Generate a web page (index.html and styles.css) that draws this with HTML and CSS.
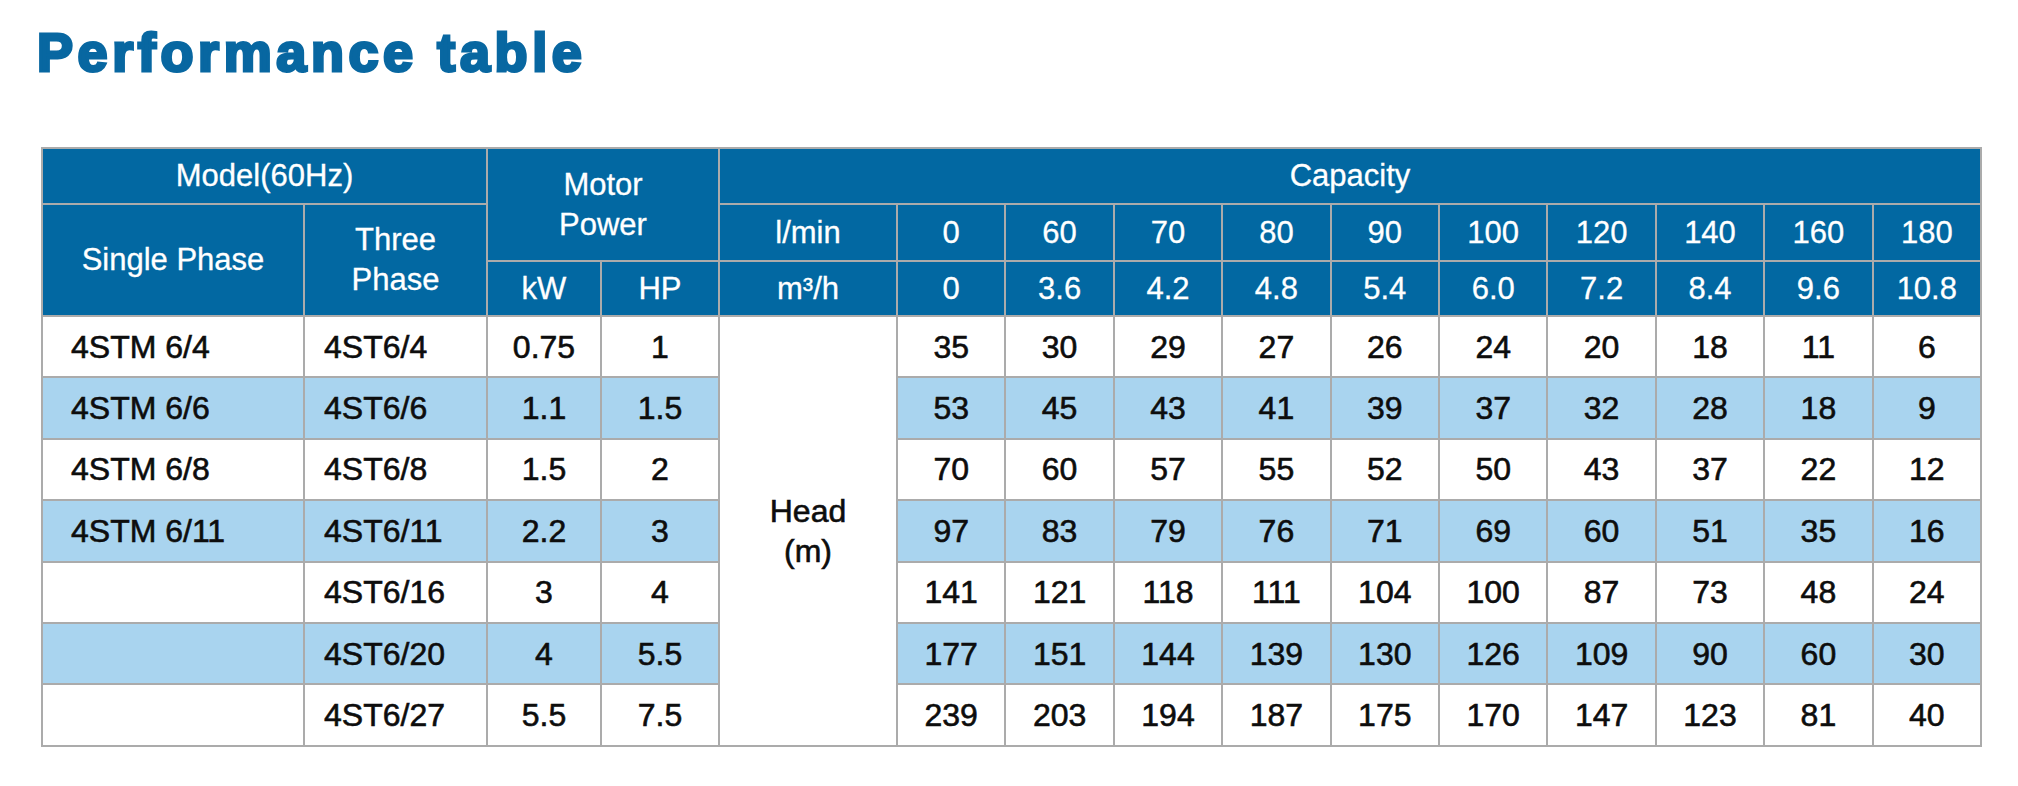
FILE: index.html
```html
<!DOCTYPE html>
<html lang="en">
<head>
<meta charset="utf-8">
<title>Performance table</title>
<link rel="stylesheet" href="styles.css">
</head>
<body>
<h1 class="title">Performance table</h1>
<div class="perf">
  <div class="hd span-model">Model(60Hz)</div>
  <div class="hd span-motor">Motor<br>Power</div>
  <div class="hd span-cap">Capacity</div>

  <div class="hd span-rows2">Single Phase</div>
  <div class="hd span-rows2">Three<br>Phase</div>
  <div class="hd">l/min</div>
  <div class="hd">0</div><div class="hd">60</div><div class="hd">70</div><div class="hd">80</div><div class="hd">90</div><div class="hd">100</div><div class="hd">120</div><div class="hd">140</div><div class="hd">160</div><div class="hd">180</div>

  <div class="hd">kW</div>
  <div class="hd">HP</div>
  <div class="hd">m³/h</div>
  <div class="hd">0</div><div class="hd">3.6</div><div class="hd">4.2</div><div class="hd">4.8</div><div class="hd">5.4</div><div class="hd">6.0</div><div class="hd">7.2</div><div class="hd">8.4</div><div class="hd">9.6</div><div class="hd">10.8</div>

  <!-- row 1 -->
  <div class="c m1">4STM 6/4</div><div class="c m2">4ST6/4</div><div class="c">0.75</div><div class="c">1</div>
  <div class="c head-cell">Head<br>(m)</div>
  <div class="c">35</div><div class="c">30</div><div class="c">29</div><div class="c">27</div><div class="c">26</div><div class="c">24</div><div class="c">20</div><div class="c">18</div><div class="c">11</div><div class="c">6</div>
  <!-- row 2 -->
  <div class="c alt m1">4STM 6/6</div><div class="c alt m2">4ST6/6</div><div class="c alt">1.1</div><div class="c alt">1.5</div>
  <div class="c alt">53</div><div class="c alt">45</div><div class="c alt">43</div><div class="c alt">41</div><div class="c alt">39</div><div class="c alt">37</div><div class="c alt">32</div><div class="c alt">28</div><div class="c alt">18</div><div class="c alt">9</div>
  <!-- row 3 -->
  <div class="c m1">4STM 6/8</div><div class="c m2">4ST6/8</div><div class="c">1.5</div><div class="c">2</div>
  <div class="c">70</div><div class="c">60</div><div class="c">57</div><div class="c">55</div><div class="c">52</div><div class="c">50</div><div class="c">43</div><div class="c">37</div><div class="c">22</div><div class="c">12</div>
  <!-- row 4 -->
  <div class="c alt m1">4STM 6/11</div><div class="c alt m2">4ST6/11</div><div class="c alt">2.2</div><div class="c alt">3</div>
  <div class="c alt">97</div><div class="c alt">83</div><div class="c alt">79</div><div class="c alt">76</div><div class="c alt">71</div><div class="c alt">69</div><div class="c alt">60</div><div class="c alt">51</div><div class="c alt">35</div><div class="c alt">16</div>
  <!-- row 5 -->
  <div class="c m1"></div><div class="c m2">4ST6/16</div><div class="c">3</div><div class="c">4</div>
  <div class="c">141</div><div class="c">121</div><div class="c">118</div><div class="c">111</div><div class="c">104</div><div class="c">100</div><div class="c">87</div><div class="c">73</div><div class="c">48</div><div class="c">24</div>
  <!-- row 6 -->
  <div class="c alt m1"></div><div class="c alt m2">4ST6/20</div><div class="c alt">4</div><div class="c alt">5.5</div>
  <div class="c alt">177</div><div class="c alt">151</div><div class="c alt">144</div><div class="c alt">139</div><div class="c alt">130</div><div class="c alt">126</div><div class="c alt">109</div><div class="c alt">90</div><div class="c alt">60</div><div class="c alt">30</div>
  <!-- row 7 -->
  <div class="c m1"></div><div class="c m2">4ST6/27</div><div class="c">5.5</div><div class="c">7.5</div>
  <div class="c">239</div><div class="c">203</div><div class="c">194</div><div class="c">187</div><div class="c">175</div><div class="c">170</div><div class="c">147</div><div class="c">123</div><div class="c">81</div><div class="c">40</div>
</div>
</body>
</html>
```

FILE: styles.css
```css
html, body {
  margin: 0;
  padding: 0;
  background: #ffffff;
}

body {
  font-family: "Liberation Sans", Arial, sans-serif;
  width: 2018px;
  height: 786px;
  overflow: hidden;
}

.title {
  margin: 25px 0 0 37px;
  font-size: 54px;
  line-height: 54px;
  font-weight: 700;
  color: #0867a1;
  letter-spacing: 4.6px;
  -webkit-text-stroke: 3px #0867a1;
}

.perf {
  margin: 68px 0 0 41px;
  width: 1941px;
  box-sizing: border-box;
  display: grid;
  grid-template-columns: 260px 181px 112px 116px 176px repeat(10, 1fr);
  grid-template-rows: 54px 55px 53px repeat(7, 59.4px);
  gap: 2px;
  padding: 2px;
  background: #ababab;
}

.hd {
  background: #0268a2;
  color: #ffffff;
  font-size: 31px;
  line-height: 40px;
  display: flex;
  align-items: center;
  justify-content: center;
  text-align: center;
  -webkit-text-stroke: 0.3px #ffffff;
}

.span-model { grid-column: span 2; }
.span-motor { grid-column: span 2; grid-row: span 2; }
.span-cap { grid-column: span 11; }
.span-rows2 { grid-row: span 2; }

.c {
  background: #ffffff;
  color: #0d0d0d;
  font-size: 32px;
  line-height: 38px;
  display: flex;
  align-items: center;
  justify-content: center;
  text-align: center;
  -webkit-text-stroke: 0.6px #0d0d0d;
}

.c.alt {
  background: #a9d4ef;
}

.c.m1 {
  justify-content: flex-start;
  padding-left: 28px;
}

.c.m2 {
  justify-content: flex-start;
  padding-left: 19px;
}

.c.head-cell {
  grid-row: span 7;
  background: #ffffff;
  line-height: 40px;
}
```
